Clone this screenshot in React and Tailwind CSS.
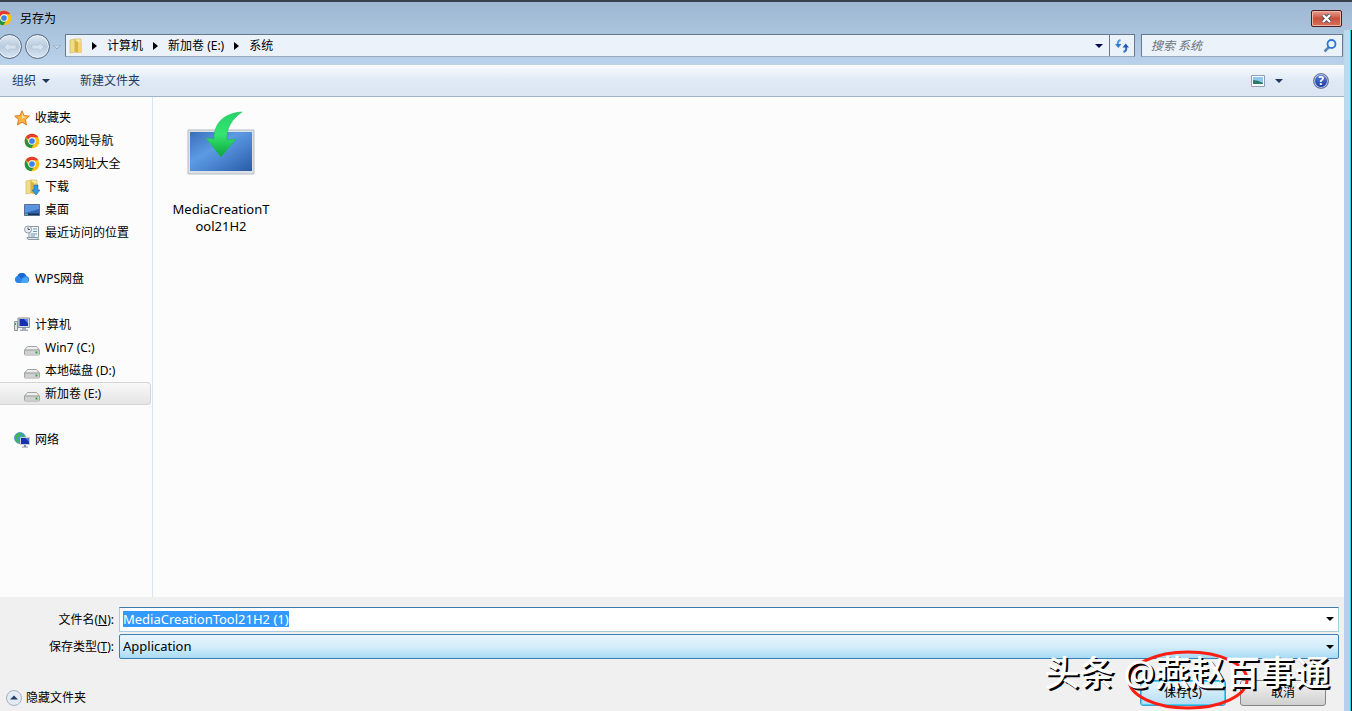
import { useEffect, useRef } from "react";

function Chrome({ className }) {
  return (
    <svg className={className} viewBox="0 0 48 48" aria-hidden="true">
      <circle cx="24" cy="24" r="22" fill="#fbc116" />
      <path d="M24 2a22 22 0 0 1 19 11H24a11 11 0 0 0-10 6L5 13A22 22 0 0 1 24 2z" fill="#e33b2e" />
      <path d="M5 13a22 22 0 0 0 17 33l10-17a11 11 0 0 1-18 0z" fill="#229342" />
      <circle cx="24" cy="24" r="11" fill="#fff" />
      <circle cx="24" cy="24" r="8.5" fill="#3b82ec" />
    </svg>
  );
}

function Folder({ className, download }) {
  return (
    <svg className={className} viewBox="0 0 16 16" aria-hidden="true">
      <path d="M2 2l5-1v13l-5 1z" fill="#f3dc86" stroke="#d1b14f" strokeWidth=".6" />
      <path d="M7 1h6v13H7z" fill="#f8e8a4" stroke="#d1b14f" strokeWidth=".6" />
      <path d="M7 2l3 2v11l-3-1z" fill="#d9b440" />
      <path d="M10 4h4v11h-4z" fill="#f0d477" />
      {download && <path d="M10 6h4v5h2l-4 5-4-5h2z" fill="#2f9be0" stroke="#1769ae" strokeWidth=".6" />}
    </svg>
  );
}

function Star() {
  return (
    <svg className="size-4" viewBox="0 0 16 16" aria-hidden="true">
      <path d="M8 .8l2.1 4.8 5.2.5-3.9 3.5 1.1 5.3L8 12.2l-4.6 2.7 1.2-5.3L.7 6.1l5.2-.5z" fill="#fcb345" stroke="#dd7a1c" strokeWidth="1" strokeLinejoin="round" />
      <path d="M8 3l1.3 3.4 3.4.4L8 8.5z" fill="#ffe7a0" />
    </svg>
  );
}

function Desktop() {
  return (
    <svg className="size-4" viewBox="0 0 16 16" aria-hidden="true">
      <path d="M.5 2.500h15v11H.5z" fill="#2f66b8" stroke="#5a6f8c" />
      <path d="M1 3h14v4L1 11z" fill="#5b95df" />
      <path d="M1 11.500h14V13H1z" fill="#1c3153" />
      <path d="M1 11.500h3V13H1z" fill="#5fb4a0" />
    </svg>
  );
}

function Recent() {
  return (
    <svg className="size-4" viewBox="0 0 16 16" aria-hidden="true">
      <path d="M5 1.500h9.500v11H5z" fill="#f3f6f8" stroke="#8b98a5" />
      <path d="M3 12.500h10l2 2H5q-2 0-2-2z" fill="#dfe5ea" stroke="#8b98a5" />
      <path d="M9 4h4M9 6.500h4M6.500 9H13M6.500 11H11" stroke="#6696b8" />
      <circle cx="4" cy="4.500" r="3.500" fill="#e8edf1" stroke="#919ca6" />
      <path d="M4 2.500v2h2" stroke="#53616e" fill="none" />
    </svg>
  );
}

function Cloud() {
  return (
    <svg className="size-4" viewBox="0 0 16 16" aria-hidden="true">
      <path d="M4 12a3.600 3.600 0 0 1-.5-7A4.700 4.700 0 0 1 12.300 5 3.600 3.600 0 0 1 12.500 12z" fill="#2a84ea" />
      <path d="M3.500 5A4.700 4.700 0 0 1 12.300 5Q9 5 7.500 8 6 5 3.500 5z" fill="#1769ce" />
      <path d="M7 12q0-5 5-6a3.200 3.200 0 0 1 .5 6z" fill="#48a5f6" />
    </svg>
  );
}

function Computer() {
  return (
    <svg className="size-4" viewBox="0 0 16 16" aria-hidden="true">
      <path d="M.5 4.500h3v9h-3z" fill="#dce3df" stroke="#8a9690" />
      <path d="M1.500 6v2" stroke="#46a44d" />
      <path d="M4 1h11.500v9.500H4z" fill="#d8dce3" stroke="#8992a0" />
      <path d="M5.500 2H14v7H5.500z" fill="#1430b0" />
      <path d="M10 2h4v4.500z" fill="#5b83ec" />
      <path d="M8 11h4v1.500h2V14H6v-1.500h2z" fill="#a7adb8" />
    </svg>
  );
}

function Drive() {
  return (
    <svg className="mt-1 size-4" viewBox="0 0 16 16" aria-hidden="true">
      <path d="M3.500 4.500h9l3 3.500v4q0 1-1 1h-13q-1 0-1-1V8z" fill="#eeefef" stroke="#a2a2a2" />
      <path d="M1 8.500h14V12.500H1z" fill="#cfd0d1" />
      <path d="M1 8h14" stroke="#8b8b8b" />
      <path d="M11.500 9.500h2v2h-2z" fill="#36aa38" />
    </svg>
  );
}

function Network() {
  return (
    <svg className="size-4" viewBox="0 0 16 16" aria-hidden="true">
      <circle cx="6" cy="6" r="5.500" fill="#3c9edc" stroke="#2b70b0" strokeWidth=".6" />
      <path d="M2 3q3-3 5-2L6 4 3 6l2 3-1 2Q0 8 1 4zM8 3l3 1v3H8z" fill="#40b457" />
      <path d="M6.500 5.500h9v7h-9z" fill="#1731ad" stroke="#c3cbd7" />
      <path d="M11 6h4v4z" fill="#4e72dc" />
      <path d="M10 13h2v1.500h2v1H8v-1h2z" fill="#8290a3" />
    </svg>
  );
}

function Down({ className = "fill-black" }) {
  return (
    <svg className={`h-1 w-2 shrink-0 ${className}`} viewBox="0 0 8 4" aria-hidden="true">
      <path d="M0 0h8L4 4z" />
    </svg>
  );
}

function Right() {
  return (
    <svg className="h-2 w-[5px] shrink-0" viewBox="0 0 5 8" aria-hidden="true">
      <path d="M0 0l5 4-5 4z" />
    </svg>
  );
}

function NavButton({ label, back }) {
  return (
    <button aria-label={label} className="flex size-[25px] shrink-0 items-center justify-center rounded-full border border-[#56677b] bg-linear-to-b from-[#dfe9f3] via-[#b9cbde] to-[#d8e6f3] shadow-[inset_0_0_0_1px_#e8f0f8]">
      <svg className="size-4" viewBox="0 0 16 16" aria-hidden="true">
        <path d={back ? "M7 3L2 8l5 5v-3h7V6H7z" : "M9 3l5 5-5 5v-3H2V6h7z"} fill="#d5e1ed" stroke="#b4c5d6" strokeWidth=".8" />
      </svg>
    </button>
  );
}

function Group({ children }) {
  return <ul className="mb-[23px]">{children}</ul>;
}

function Item({ icon, children, root, selected }) {
  return (
    <li>
      <a
        href="#"
        className={`flex h-[23px] items-center gap-[5px] border border-l-0 ${root ? "pl-[14px]" : "pl-6"} ${selected ? "mr-px rounded-r-sm border-[#d5d5d5] bg-linear-to-b from-[#f8f8f8] to-[#e5e5e5]" : "border-transparent"}`}
      >
        {icon}
        <span>{children}</span>
      </a>
    </li>
  );
}

function MediaIcon() {
  return (
    <svg className="h-[66px] w-[70px]" viewBox="0 0 70 66" aria-hidden="true">
      <defs>
        <linearGradient id="screen" x1="0" y1="0" x2="1" y2="1">
          <stop offset="0" stopColor="#3a6fb9" />
          <stop offset=".4" stopColor="#5c9be4" />
          <stop offset=".6" stopColor="#4c86d2" />
          <stop offset="1" stopColor="#285ba6" />
        </linearGradient>
        <linearGradient id="arrow" x1="0" y1="0" x2="0" y2="1">
          <stop offset="0" stopColor="#23d468" />
          <stop offset=".5" stopColor="#35e56f" />
          <stop offset="1" stopColor="#0ba33e" />
        </linearGradient>
      </defs>
      <path d="M2 19h66v44H2z" fill="#dbe1e4" stroke="#b4bdc4" />
      <path d="M4 21h62v39H4z" fill="url(#screen)" />
      <path d="M56 1C38 2 28 12 28 28l-8-1 15 19 15-18-9 1C40 17 46 8 56 1z" fill="url(#arrow)" stroke="#19b750" strokeWidth=".5" />
    </svg>
  );
}

export default function App() {
  const nameRef = useRef(null);
  useEffect(() => {
    nameRef.current.focus();
    nameRef.current.select();
  }, []);

  return (
    <div className="relative flex min-h-screen overflow-hidden border-t-2 border-[#36434f] bg-[#b9d1ea] font-['Noto_Sans','Noto_Sans_CJK_SC',sans-serif] text-xs text-black">
      <div className="flex min-w-0 flex-1 flex-col">
        <header className="bg-linear-to-b from-[#9db7d2] to-[#bad2eb]">
          <div className="flex h-8 items-center pr-[2px]">
            <Chrome className="-ml-1 size-4 shrink-0" />
            <h1 className="mt-px ml-2">另存为</h1>
            <button aria-label="关闭" className="ml-auto flex h-[17px] w-[31px] items-center justify-center rounded-[2px] border border-[#4d1a20] bg-linear-to-b from-[#e5a092] via-[#c7503c] via-50% to-[#d8715b] shadow-[inset_0_0_0_1px_#efb5a8]">
              <svg className="h-[9px] w-[11px]" viewBox="0 0 11 9" aria-hidden="true">
                <path d="M2 1l7 7M9 1L2 8" stroke="#53565f" strokeWidth="4" />
                <path d="M2 1l7 7M9 1L2 8" stroke="#fff" strokeWidth="2.200" />
              </svg>
            </button>
          </div>
          <div className="flex h-[31px] items-start pr-px">
            <div className="-ml-[3px] flex items-center gap-[3px]">
              <NavButton label="后退" back />
              <NavButton label="前进" />
              <button aria-label="最近的页面" className="flex h-6 w-2 items-center"><Down className="fill-[#c8d8e8] stroke-[#94abc3]" /></button>
            </div>
            <nav aria-label="地址" className="ml-1 flex h-[23px] min-w-0 flex-1 items-center border border-[#66788c] border-b-[#96a9bd] bg-[#ebf2fa] pl-[2px]">
              <Folder className="size-4 shrink-0" />
              <span className="ml-2"><Right /></span>
              <a href="#" className="mx-[10px]">计算机</a>
              <Right />
              <a href="#" className="mx-[10px]">新加卷 (E:)</a>
              <Right />
              <a href="#" className="mx-[10px]">系统</a>
              <button aria-label="以前的位置" className="ml-auto flex h-full w-5 items-center justify-center"><Down className="fill-[#000050]" /></button>
              <button aria-label="刷新" className="flex h-full w-[25px] items-center justify-center border-l border-[#66788c]">
                <svg className="size-4" viewBox="0 0 16 16" aria-hidden="true">
                  <path d="M6.500 2Q3 3 4 8" fill="none" stroke="#4a97de" strokeWidth="2" />
                  <path d="M1 6h6.500L4.300 10z" fill="#2b7bd0" />
                  <path d="M9.500 14q3.500-1 2.500-5" fill="none" stroke="#2f6cc4" strokeWidth="2" />
                  <path d="M8.500 9.500h6.500L11.700 5.500z" fill="#1e57b4" />
                </svg>
              </button>
            </nav>
            <div className="ml-[6px] flex h-[23px] w-[202px] items-center border border-[#66788c] border-b-[#96a9bd] bg-[#ebf2fa] pr-1 pl-[9px]">
              <input type="search" aria-label="搜索 系统" placeholder="搜索 系统" className="min-w-0 flex-1 italic outline-none placeholder:text-[#6c747c]" />
              <svg className="size-4" viewBox="0 0 16 16" fill="none" aria-hidden="true">
                <path d="M7.500 8.500L2.500 13.500" stroke="#5c86b8" strokeWidth="2.500" />
                <circle cx="9.500" cy="6" r="4" fill="#edf6ff" stroke="#2f77ce" strokeWidth="1.800" />
              </svg>
            </div>
          </div>
        </header>

        <div className="flex h-8 items-center border-t border-b border-t-white border-b-[#a3b3c8] bg-linear-to-b from-[#f7fbfe] from-0% via-[#dfe9f5] via-50% to-[#dce6f4] pr-[15px] pl-3 text-[#1e395b]">
          <button className="flex items-center gap-[6px]">组织 <Down className="fill-[#1e395b]" /></button>
          <button className="ml-[30px]">新建文件夹</button>
          <button aria-label="视图" className="ml-auto">
            <svg className="h-3 w-[14px]" viewBox="0 0 14 12" aria-hidden="true">
              <path d="M.5.5h13v11H.5z" fill="#fff" stroke="#8c9fb4" />
              <path d="M2 2h10v7H2z" fill="#8fc7ee" />
              <path d="M2 5q5 0 10 3v1H2z" fill="#287c6a" />
            </svg>
          </button>
          <button aria-label="更多视图" className="ml-[10px] flex h-4 items-center"><Down className="fill-[#1e395b]" /></button>
          <button aria-label="帮助" className="ml-[30px] flex size-4 items-center justify-center rounded-full border border-[#6f7d9a] bg-linear-to-b from-[#5c81da] to-[#1c359e] text-xs font-bold text-white shadow-[inset_0_0_0_1px_#b6c3e0]">?</button>
        </div>

        <main className="flex flex-1 bg-[#fcfcfc]">
          <aside className="w-[153px] shrink-0 border-r border-[#d6e5f5] pt-[9px]">
            <Group>
              <Item root icon={<Star />}>收藏夹</Item>
              <Item icon={<Chrome className="size-4" />}>360网址导航</Item>
              <Item icon={<Chrome className="size-4" />}>2345网址大全</Item>
              <Item icon={<Folder className="size-4" download />}>下载</Item>
              <Item icon={<Desktop />}>桌面</Item>
              <Item icon={<Recent />}>最近访问的位置</Item>
            </Group>
            <Group><Item root icon={<Cloud />}>WPS网盘</Item></Group>
            <Group>
              <Item root icon={<Computer />}>计算机</Item>
              <Item icon={<Drive />}>Win7 (C:)</Item>
              <Item icon={<Drive />}>本地磁盘 (D:)</Item>
              <Item selected icon={<Drive />}>新加卷 (E:)</Item>
            </Group>
            <Group><Item root icon={<Network />}>网络</Item></Group>
          </aside>
          <section aria-label="文件" className="pt-[14px] pl-[18px]">
            <button className="flex w-[100px] flex-col items-center">
              <MediaIcon />
              <span className="mt-6 text-center text-[13px] leading-[17px]">MediaCreationT<br />ool21H2</span>
            </button>
          </section>
        </main>

        <footer className="bg-[#f0f0f0] pt-[10px] pr-[5px] pb-[5px]">
          <div className="grid grid-cols-[114px_1fr] items-center gap-x-[5px] gap-y-[2px]">
            <label htmlFor="filename" className="text-right">文件名(<u>N</u>):</label>
            <div className="flex h-[25px] items-center border border-[#a9cbe0] border-t-[#3d7bad] bg-white pr-1 pb-[2px] pl-[3px]">
              <input id="filename" ref={nameRef} defaultValue="MediaCreationTool21H2 (1)" className="min-w-0 flex-1 text-[13px] leading-4 outline-none selection:bg-[#3399ff] selection:text-white" />
              <button aria-label="文件名列表"><Down /></button>
            </div>
            <label htmlFor="filetype" className="text-right">保存类型(<u>T</u>):</label>
            <div className="relative flex items-center">
              <select id="filetype" className="h-[25px] w-full appearance-none rounded-[2px] border border-[#3c7fb1] bg-linear-to-b from-[#e8f5fc] via-[#d5eefb] via-50% to-[#a8daf5] pl-[3px] text-[13px]">
                <option>Application</option>
              </select>
              <span className="pointer-events-none absolute right-[5px]"><Down /></span>
            </div>
          </div>
          <div className="mt-[21px] flex items-end pr-[13px] pl-[6px]">
            <button className="flex items-center gap-1">
              <svg className="size-4" viewBox="0 0 16 16" aria-hidden="true">
                <circle cx="8" cy="8" r="7.500" fill="#e4ebf3" stroke="#a5b2c4" />
                <path d="M4 9.500L8 5.500l4 4z" fill="#233f70" />
              </svg>
              隐藏文件夹
            </button>
            <button className="ml-auto h-[26px] w-[86px] rounded-[3px] border border-[#3c9fd0] bg-linear-to-b from-[#e9f6fd] to-[#b3def5] shadow-[inset_0_0_0_1px_#48d0f5]">保存(S)</button>
            <button className="ml-[14px] h-[26px] w-[86px] rounded-[3px] border border-[#858585] bg-linear-to-b from-[#f3f3f3] to-[#d0d0d0]">取消</button>
          </div>
        </footer>
      </div>
      <div className="flex w-2 flex-col">
        <div className="h-7 bg-linear-to-b from-[#9db7d2] to-[#aac4df]" />
        <div className="flex-1 border-r border-black">
          <div className="h-[90px] border-r border-[#22d3dd] bg-[#bcdbea]" />
          <div className="h-full border-r border-[#22d3dd] bg-[#b9cdf3]" />
        </div>
      </div>

      <svg className="pointer-events-none absolute right-[102px] bottom-0 h-[64px] w-[124px]" viewBox="0 0 124 64" aria-hidden="true">
        <ellipse cx="62" cy="33" rx="59" ry="28" fill="none" stroke="#fa1e13" strokeWidth="3" />
      </svg>
      <p className="pointer-events-none absolute right-[22px] bottom-[18px] text-[35px] leading-[40px] font-medium whitespace-nowrap text-white [text-shadow:2px_2px_0_#000]">头条 @燕赵百事通</p>
    </div>
  );
}
